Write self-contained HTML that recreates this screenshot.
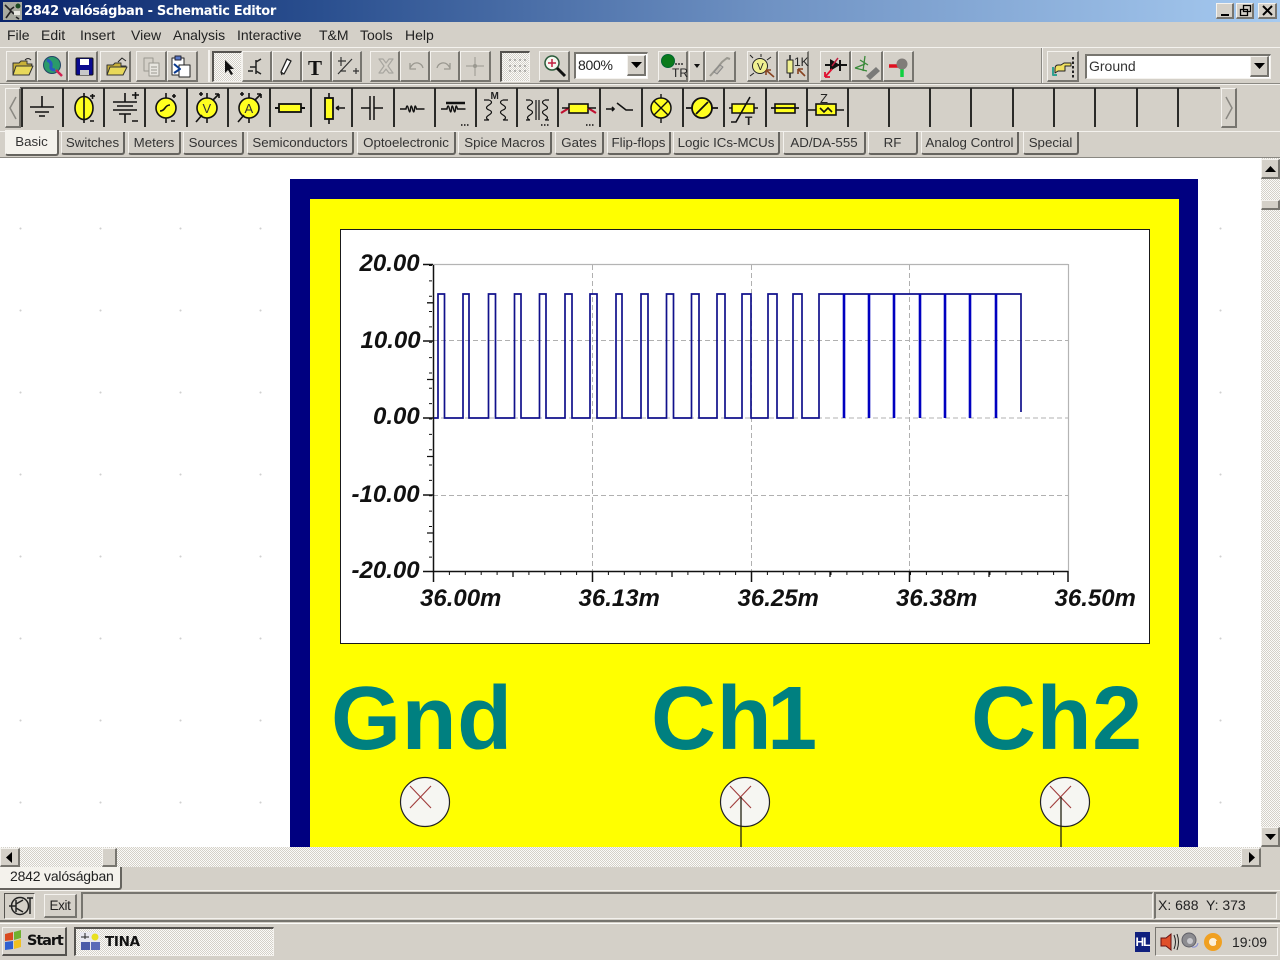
<!DOCTYPE html>
<html><head><meta charset="utf-8"><title>2842 valóságban - Schematic Editor</title>
<style>
*{box-sizing:border-box}
html,body{margin:0;padding:0;width:1280px;height:960px;overflow:hidden;background:#d4d0c8}
body{position:relative;font-family:"Liberation Sans",sans-serif;color:#1a1a1a}
.a{position:absolute}
.t{position:absolute;white-space:nowrap}
.m{position:absolute;top:27px;font-size:14px;line-height:16px;white-space:nowrap;color:#222}
.b{position:absolute;background:#d4d0c8;border-top:1px solid #f4f2ee;border-left:1px solid #f4f2ee;border-right:2px solid #77756f;border-bottom:2px solid #77756f}
.tb{top:51px;height:31px}
.tab{position:absolute;top:132px;height:23px;font-size:13.3px;line-height:21px;text-align:center;white-space:nowrap;border-right:2px solid #66645f;border-bottom:2px solid #66645f;border-left:1px solid #f4f2ee;border-radius:0 0 3px 3px;color:#333}
.sep{position:absolute;top:88px;width:2px;height:39px;background:#2a2a28}
.dith{background-color:#e9e7e3;background-image:repeating-conic-gradient(#d4d0c8 0 25%,#fbfbf9 0 50%);background-size:2px 2px}
.sunk{position:absolute;border-top:2px solid #77756f;border-left:2px solid #77756f;border-right:1px solid #f4f2ee;border-bottom:1px solid #f4f2ee}
</style></head><body>

<!-- title bar -->
<div class="a" style="left:0;top:0;width:1280px;height:22px;background:linear-gradient(90deg,#0a246a 0,#2a4f8f 25%,#6f92c3 60%,#a6caf0 100%)"></div>
<svg class="a" style="left:3px;top:2px" width="19" height="18"><rect width="19" height="18" fill="#a8aaa0"/><path d="M2 3l5 5 4-3M3 16l5-7 3 3M13 15l3 2" stroke="#222" stroke-width="1.600" fill="none"/><circle cx="15" cy="4" r="2.500" fill="#1a4a20"/><rect x="11" y="9" width="6" height="4" fill="#e8e8e0"/></svg>
<div class="t" style="left:24px;top:4px;font:bold 13px/16px 'DejaVu Sans',sans-serif;color:#fff;letter-spacing:-.34px">2842 valóságban - Schematic Editor</div>
<div class="b" style="left:1216px;top:3px;width:18px;height:16px"><div class="a" style="left:4px;top:10px;width:8px;height:2px;background:#000"></div></div>
<div class="b" style="left:1236px;top:3px;width:18px;height:16px"><svg class="a" style="left:2px;top:0" width="13" height="13"><path d="M4.500 1.500h7v6h-7zM1.500 5.500h7v6h-7z" fill="#d4d0c8" stroke="#000" stroke-width="1.300"/></svg></div>
<div class="b" style="left:1258px;top:3px;width:19px;height:16px"><svg class="a" style="left:2px;top:1px" width="13" height="12"><path d="M2 1l9 9M11 1l-9 9" stroke="#000" stroke-width="2"/></svg></div>

<!-- menu -->
<div class="m" style="left:7px">File</div><div class="m" style="left:41px">Edit</div><div class="m" style="left:80px">Insert</div><div class="m" style="left:131px">View</div><div class="m" style="left:173px">Analysis</div><div class="m" style="left:237px">Interactive</div><div class="m" style="left:319px">T&amp;M</div><div class="m" style="left:360px">Tools</div><div class="m" style="left:405px">Help</div>

<!-- toolbar separators -->
<div class="a" style="left:0;top:47px;width:1280px;height:1px;background:#f4f2ee"></div>
<div class="a" style="left:0;top:83px;width:1280px;height:1px;background:#8a8882"></div>
<div class="a" style="left:0;top:84px;width:1280px;height:1px;background:#f4f2ee"></div>
<div class="a" style="left:1041px;top:48px;width:1px;height:35px;background:#8a8882"></div>
<div class="a" style="left:1042px;top:48px;width:1px;height:35px;background:#f4f2ee"></div>
<div class="a" style="left:208px;top:50px;width:2px;height:32px;background:#f4f2ee"></div>

<!-- toolbar 1 -->
<div class="b tb" style="left:6px;width:31px"></div><div class="b tb" style="left:37px;width:31px"></div><div class="b tb" style="left:68px;width:30px"></div><div class="b tb" style="left:100px;width:31px"></div>
<div class="b tb" style="left:136px;width:31px"></div><div class="b tb" style="left:167px;width:31px"></div>
<div class="b tb dith" style="left:212px;width:30px;border-color:#55534f #f4f2ee #f4f2ee #55534f;border-width:2px 1px 1px 2px"></div>
<div class="b tb" style="left:242px;width:30px"></div><div class="b tb" style="left:272px;width:30px"></div><div class="b tb" style="left:302px;width:30px"></div><div class="b tb" style="left:332px;width:30px"></div>
<div class="b tb" style="left:370px;width:30px"></div><div class="b tb" style="left:400px;width:30px"></div><div class="b tb" style="left:430px;width:30px"></div><div class="b tb" style="left:460px;width:31px"></div>
<div class="b tb dith" style="left:500px;width:30px;border-color:#55534f #f4f2ee #f4f2ee #55534f;border-width:2px 1px 1px 2px"></div>
<div class="b tb" style="left:539px;width:31px"></div>
<div class="sunk" style="left:574px;top:52px;width:74px;height:27px;background:#fff"></div>
<div class="t" style="left:578px;top:57px;font-size:14px;line-height:16px;color:#222;letter-spacing:-.3px">800%</div>
<div class="b" style="left:627px;top:55px;width:19px;height:21px"><svg class="a" style="left:3px;top:6px" width="11" height="7"><path d="M0 0h11L5.500 6z" fill="#000"/></svg></div>
<div class="b tb" style="left:658px;width:30px"></div><div class="b tb" style="left:689px;width:16px"></div><div class="b tb" style="left:705px;width:31px"></div>
<div class="b tb" style="left:747px;width:31px"></div><div class="b tb" style="left:778px;width:31px"></div>
<div class="b tb" style="left:820px;width:31px"></div><div class="b tb" style="left:851px;width:32px"></div><div class="b tb" style="left:883px;width:31px"></div>
<div class="b tb" style="left:1047px;width:32px"></div>
<div class="sunk" style="left:1085px;top:54px;width:186px;height:25px;background:#fff"></div>
<div class="t" style="left:1089px;top:58px;font-size:14px;line-height:16px;color:#333">Ground</div>
<div class="b" style="left:1250px;top:56px;width:19px;height:21px"><svg class="a" style="left:3px;top:6px" width="11" height="7"><path d="M0 0h11L5.500 6z" fill="#000"/></svg></div>

<!-- toolbar 2 -->
<div class="a" style="left:20px;top:87px;width:1200px;height:2px;background:#55534f"></div>
<div class="b" style="left:5px;top:88px;width:16px;height:40px"><svg class="a" style="left:2px;top:7px" width="10" height="24"><path d="M8 1L2 12l6 11" fill="none" stroke="#8a8882" stroke-width="1.500"/></svg></div>
<div class="b" style="left:1221px;top:88px;width:16px;height:40px"><svg class="a" style="left:2px;top:7px" width="10" height="24"><path d="M2 1l6 11L2 23" fill="none" stroke="#8a8882" stroke-width="1.500"/></svg></div>
<div class="sep" style="left:21px"></div><div class="sep" style="left:62px"></div><div class="sep" style="left:103px"></div><div class="sep" style="left:144px"></div><div class="sep" style="left:186px"></div><div class="sep" style="left:227px"></div><div class="sep" style="left:269px"></div><div class="sep" style="left:310px"></div><div class="sep" style="left:351px"></div><div class="sep" style="left:393px"></div><div class="sep" style="left:434px"></div><div class="sep" style="left:475px"></div><div class="sep" style="left:516px"></div><div class="sep" style="left:557px"></div><div class="sep" style="left:599px"></div><div class="sep" style="left:641px"></div><div class="sep" style="left:682px"></div><div class="sep" style="left:723px"></div><div class="sep" style="left:765px"></div><div class="sep" style="left:806px"></div><div class="sep" style="left:847px"></div><div class="sep" style="left:888px"></div><div class="sep" style="left:929px"></div><div class="sep" style="left:970px"></div><div class="sep" style="left:1012px"></div><div class="sep" style="left:1053px"></div><div class="sep" style="left:1094px"></div><div class="sep" style="left:1136px"></div><div class="sep" style="left:1177px"></div>
<div class="a" style="left:0;top:131px;width:1280px;height:1px;background:#f4f2ee"></div>

<!-- tabs -->
<div class="tab" style="left:5px;top:130px;width:54px;height:26px;background:#f4f2ec;line-height:24px">Basic</div>
<div class="tab" style="left:61px;width:64px">Switches</div><div class="tab" style="left:128px;width:53px">Meters</div><div class="tab" style="left:183px;width:61px">Sources</div><div class="tab" style="left:247px;width:107px">Semiconductors</div><div class="tab" style="left:357px;width:99px">Optoelectronic</div><div class="tab" style="left:458px;width:94px">Spice Macros</div><div class="tab" style="left:555px;width:49px">Gates</div><div class="tab" style="left:607px;width:64px">Flip-flops</div><div class="tab" style="left:673px;width:107px">Logic ICs-MCUs</div><div class="tab" style="left:783px;width:83px">AD/DA-555</div><div class="tab" style="left:868px;width:50px">RF</div><div class="tab" style="left:921px;width:98px">Analog Control</div><div class="tab" style="left:1023px;width:56px">Special</div>

<!-- canvas -->
<div class="a" style="left:0;top:157px;width:1280px;height:1px;background:#8a8882"></div>
<div class="a" style="left:0;top:158px;width:1261px;height:689px;background-color:#fff;background-image:radial-gradient(circle at 20.500px 70.500px,#d0d0d0 0,#d0d0d0 .8px,transparent 1.200px);background-size:80px 82px"></div>
<div class="a" style="left:290px;top:179px;width:908px;height:668px;background:#000080"></div>
<div class="a" style="left:310px;top:199px;width:869px;height:648px;background:#ffff00"></div>
<div class="a" style="left:340px;top:229px;width:810px;height:415px;background:#fff;border:1px solid #1a1a1a"></div>

<svg class="a" style="left:0;top:0" width="1280" height="960" shape-rendering="geometricPrecision">
<!-- plot -->
<g fill="none">
<path d="M433 264.500H1068M1068.500 264V571" stroke="#b4b4b4" stroke-width="1.200"/>
<path d="M433 340.500H1068M433 418H1068M433 495.500H1068M592.500 265V571M751.500 265V571M909.500 265V571" stroke="#b0b0b0" stroke-width="1" stroke-dasharray="5 3"/>
<path d="M433.500 265V572M423 571.500H1068" stroke="#111" stroke-width="1.500"/>
<path d="M423 264.500h10M423 341h10M423 418h10M423 495h10M433.500 571v11M592.500 571v11M751.500 571v11M909.500 571v11M1068 571v11" stroke="#111" stroke-width="1.500"/>
<path d="M427 302.800h6M427 379.500h6M427 456.500h6M427 533h6M513 571v6M672 571v6M830 571v6M989 571v6" stroke="#111" stroke-width="1.300"/>
<path d="M430.500 265V571" stroke="#111" stroke-width="3" stroke-dasharray="1 14.350"/>
<path d="M433 573.500H1068" stroke="#111" stroke-width="3" stroke-dasharray="1 14.900"/>
<path d="M434 418H438V294H444.500V418H463V294H469V418H488.500V294H495.500V418H514.500V294H521V418H539.500V294H546V418H565V294H572V418H590V294H597V418H616V294H622V418H641V294H648V418H666.500V294H673.500V418H691.500V294H699V418H717V294H725V418H742V294H751V418H768V294H777V418H793V294H802V418H819V294H1021V412" stroke="#11118c" stroke-width="1.700"/>
<path d="M844 294V418M869 294V418M894 294V418M920 294V418M945 294V418M970 294V418M996 294V418" stroke="#0000c0" stroke-width="2.600"/>
</g>
<g font-family="Liberation Sans" font-weight="bold" font-style="italic" font-size="24" fill="#111">
<text x="359.500" y="271">20.00</text><text x="360.500" y="348">10.00</text><text x="373" y="424">0.00</text><text x="351.500" y="502">-10.00</text><text x="351.500" y="578">-20.00</text>
<text x="420" y="606">36.00m</text><text x="578.500" y="606">36.13m</text><text x="737.500" y="606">36.25m</text><text x="896" y="606">36.38m</text><text x="1054.500" y="606">36.50m</text>
</g>
<g font-family="Liberation Sans" font-weight="bold" font-size="90" fill="#008080" letter-spacing=".6">
<text x="331" y="749">Gnd</text><text x="651" y="749">Ch<tspan dx="-5">1</tspan></text><text x="971" y="749">Ch2</text>
</g>
<!-- connectors -->
<g fill="#f6f6f2" stroke="#222" stroke-width="1.200">
<circle cx="425" cy="802" r="24.500"/><circle cx="745" cy="802" r="24.500"/><circle cx="1065" cy="802" r="24.500"/>
</g>
<g stroke="#a03c3c" stroke-width="1.100" fill="none">
<path d="M410 786l21 22M431 786l-21 22M730 786l21 22M751 786l-21 22M1050 786l21 22M1071 786l-21 22"/>
</g>
<path d="M741 797V847M1061 797V847" stroke="#221" stroke-width="1.300"/>

<!-- toolbar 1 icons -->
<g stroke-linejoin="round">
<path d="M13 75V63h6l2-2h6v3h5l-3 11z" fill="#c8b038" stroke="#333"/><path d="M13 75l3-9h17l-4 9z" fill="#e8d85a" stroke="#333"/><path d="M25 60q3-3 6 0" stroke="#222" fill="none"/>
<circle cx="52" cy="65" r="8.500" fill="#2a9a6a" stroke="#246"/><path d="M47 60q5 2 4 6t4 4" stroke="#2858c0" stroke-width="3" fill="none"/><path d="M56 70l6 6" stroke="#d02050" stroke-width="2.500"/>
<rect x="76" y="58" width="17" height="17" rx="1" fill="#0a0a90" stroke="#111"/><rect x="80" y="59" width="9" height="6" fill="#fff"/><rect x="80" y="70" width="9" height="5" fill="#c8c8c8"/>
<path d="M107 75V65h6l2-2h6v3h5l-3 9z" fill="#c8b038" stroke="#333"/><path d="M107 75l3-8h17l-4 8z" fill="#e8d85a" stroke="#333"/><path d="M118 62l4-4 4 3" stroke="#222" fill="none"/>
<path d="M144 58h9v13h-9z" fill="#d4d0c8" stroke="#9a9890"/><path d="M149 63h10v13h-10z" fill="#e8e6e0" stroke="#9a9890"/><path d="M151 67h6M151 70h6M151 73h6" stroke="#9a9890"/>
<path d="M172 58h12v17h-12z" fill="#fff" stroke="#222"/><path d="M175 56h6v4h-6z" fill="#5878c8" stroke="#223"/><path d="M179 65h11v12h-11z" fill="#fff" stroke="#222"/><path d="M174 64l6 5-6 4" stroke="#0a3a90" stroke-width="2" fill="none"/>
<path d="M225 60v13l3-3 3 5 2-1-3-5h4z" fill="#111"/>
<path d="M256 60v14M250 67h6M256 62l5-3M256 71l5 3M248 71h5" stroke="#222" stroke-width="1.500" fill="none"/>
<path d="M284 74l-3-2 6-13 4 2z M281 72l1 3" fill="#fff" stroke="#222" stroke-width="1.300"/>
<text x="308" y="75" font-family="Liberation Serif" font-weight="bold" font-size="21" fill="#111">T</text>
<path d="M338 74l14-15M338 61h8M341 57v9M353 71h6M356 68v6M340 71h6" stroke="#333" stroke-width="1.200" fill="none"/>
<path d="M379 59l4 0 3 4 3-4 4 0-5 7 5 7h-4l-3-4-3 4h-4l5-7z" fill="#d4d0c8" stroke="#a8a6a0" stroke-width="1.200"/>
<path d="M410 68q3-6 8-5 4 1 5 5M410 63v6h6" stroke="#9a9890" fill="none" stroke-width="1.300"/>
<path d="M450 68q-3-6-8-5-4 1-5 5M450 63v6h-6" stroke="#9a9890" fill="none" stroke-width="1.300"/>
<path d="M475 57v19M466 66h18" stroke="#9a9890"/><circle cx="475" cy="66" r="2" fill="#9a9890"/>
<g fill="#666"><circle cx="510" cy="60" r=".7"/><circle cx="515" cy="60" r=".7"/><circle cx="520" cy="60" r=".7"/><circle cx="525" cy="60" r=".7"/><circle cx="510" cy="66" r=".7"/><circle cx="515" cy="66" r=".7"/><circle cx="520" cy="66" r=".7"/><circle cx="525" cy="66" r=".7"/><circle cx="510" cy="71" r=".7"/><circle cx="515" cy="71" r=".7"/><circle cx="520" cy="71" r=".7"/><circle cx="525" cy="71" r=".7"/></g>
<circle cx="552" cy="63" r="7" fill="#f4f8f0" stroke="#2a5a3a" stroke-width="1.500"/><path d="M552 59v8M548 63h8" stroke="#c02040" stroke-width="1.500"/><path d="M557 68l8 8" stroke="#111" stroke-width="3"/>
<circle cx="668" cy="61" r="6.500" fill="#0a7a1a" stroke="#063"/><path d="M675 64h9" stroke="#333" stroke-dasharray="2 1" stroke-width="1.500"/>
<text x="672" y="77" font-size="12" font-family="Liberation Sans" fill="#222">TR</text>
<path d="M694 64h6l-3 4z" fill="#111"/>
<path d="M710 76l8-9 4-5 5-4 3 1" stroke="#9a9890" stroke-width="2" fill="none"/><path d="M714 72l6-7 3 2-6 7z" fill="#c0bcb4" stroke="#888"/>
<circle cx="760" cy="66" r="7.500" fill="#f0f090" stroke="#222"/><text x="757" y="70" font-size="10" fill="#222" font-family="Liberation Sans">V</text><path d="M753 58l-3-3M761 57v-3M767 60l4-3M754 73l-4 3" stroke="#222"/><path d="M766 70l8 7M766 70h5M766 70v5" stroke="#842" stroke-width="1.600" fill="none"/>
<rect x="787" y="60" width="6" height="13" fill="#f0f090" stroke="#222"/><path d="M790 55v5M790 73v5" stroke="#222" stroke-width="1.500"/><text x="794" y="66" font-size="12" fill="#222" font-family="Liberation Sans">1K</text><path d="M798 69l7 7M798 69h5M798 69v5" stroke="#842" stroke-width="1.600" fill="none"/>
<path d="M825 65h22M840 60v11" stroke="#111" stroke-width="2"/><path d="M830 59l10 6-10 6z" fill="#111"/><path d="M838 58l-6 8" stroke="#c02040" stroke-width="1.500"/><path d="M832 69l-7 8M825 77v-5M825 77h5" stroke="#e01030" stroke-width="1.800" fill="none"/>
<path d="M855 68l10-4M855 68l12 3M865 56l-2 15M860 60l8 5" stroke="#3a8a3a" fill="none" stroke-width="1.300"/><path d="M866 76l10-9 4 4-10 9z" fill="#7a7a78"/>
<path d="M889 66h10" stroke="#e01020" stroke-width="3.500"/><path d="M902 68v9" stroke="#10d040" stroke-width="3.500"/><circle cx="902" cy="64" r="5.500" fill="#807c78"/>
<path d="M1055 69q0-4 3-4h3l3-2h7v3h-6v5h-7l-3 2z" fill="#f0e060" stroke="#222"/><path d="M1053 67v8h4" stroke="#30a090" stroke-width="2" fill="none"/><path d="M1073 57v21" stroke="#222" stroke-width="2" stroke-dasharray="2.500 2"/>
</g>

<!-- toolbar 2 icons -->
<g stroke="#111" stroke-width="1.600" fill="none">
<path d="M42 96v11M30 107h24M35 112h14M39 116h6"/>
<ellipse cx="84" cy="108" rx="9" ry="11.500" fill="#ffff20"/><path d="M84 93v30M90 96h5M92.500 94v5M90 121h4"/>
<path d="M125 93v9M113 102h24M117 106h16M113 110h24M119 114h12M125 114v9M132 95h7M135.500 92v7M132 121h6"/>
<circle cx="166" cy="108" r="10" fill="#ffff20"/><path d="M166 93v5M166 118v5M160 111q3 0 5-3t5-3M172 96h4M174 94v4M171 121h4"/>
<circle cx="207" cy="108" r="10" fill="#ffff20"/><path d="M207 93v5M207 118v5M196 122l6-7M213 100l6-6M219 94h-4M219 94v4M199 94h4M201 92v4"/>
<circle cx="249" cy="108" r="10" fill="#ffff20"/><path d="M249 93v5M249 118v5M238 122l6-7M255 100l6-6M261 94h-4M261 94v4M240 94h4M242 92v4"/>
<g font-family="Liberation Sans" font-size="13" fill="#333" stroke="none"><text x="202.500" y="113">V</text><text x="244.500" y="113">A</text></g>
<rect x="279" y="104" width="22" height="8" fill="#ffff20" stroke-width="1.800"/><path d="M275 108h4M301 108h4" stroke-width="2"/>
<rect x="325" y="98" width="8" height="21" fill="#ffff20" stroke-width="1.800"/><path d="M329 93v5M329 119v5M345 108h-9M336 108l3-2M336 108l3 2"/>
<path d="M361 108h9M374 108h9M370 96v24M374 96v24" stroke-width="1.500"/>
<path d="M400 109h6q1-6 2.500 0t2 0 2 0 2 0 2 0h8" stroke-width="1.400"/>
<path d="M441 109h6q1-6 2.500 0t2 0 2 0 2 0 2 0h8" stroke-width="1.400"/><path d="M446 103h19" stroke-width="2.500"/><path d="M461 125h9" stroke-dasharray="1.500 1.500"/>
<g stroke-width="1.200"><path d="M489 100q5 2 0 5t0 5 0 5 0 5M503 100q-5 2 0 5t0 5 0 5 0 5M484 100h5M484 120h5M503 100h5M503 120h5"/></g>
<text x="490.500" y="99" font-size="10" font-weight="bold" font-family="Liberation Sans" fill="#222" stroke="none">M</text>
<path d="M530 100q5 2 0 5t0 5 0 5 0 5M545 100q-5 2 0 5t0 5 0 5 0 5M536 100v20M539 100v20M526 100h4M526 120h4M545 100h4M545 120h4" stroke-width="1.200"/><path d="M541 125h9" stroke-dasharray="1.500 1.500"/>
<rect x="569" y="104" width="19" height="9" fill="#ffff20" stroke-width="1.600"/><path d="M561 113l8-5M596 113l-8-5" stroke="#c01030" stroke-width="2.200"/><path d="M562 108h7M588 108h8"/><path d="M586 125h9" stroke-dasharray="1.500 1.500"/>
<path d="M606 109h8M612 107l2 2-2 2M617 103l9 7h7"/>
<circle cx="661" cy="108" r="10" fill="#ffff20" stroke-width="1.500"/><path d="M654 101l14 14M668 101l-14 14M661 94v4M661 118v5" stroke-width="1.400"/>
<ellipse cx="702" cy="108" rx="10" ry="10" fill="#ffff20" stroke-width="1.800"/><path d="M696 114l12-12M686 108h6M712 108h6" stroke-width="1.800"/>
<rect x="732" y="104" width="22" height="9" fill="#ffff20" stroke-width="1.500"/><path d="M729 108h3M754 108h4M731 122h5l14-25"/><text x="745" y="125" font-size="12" font-weight="bold" font-family="Liberation Sans" fill="#222" stroke="none">T</text>
<rect x="775" y="104" width="20" height="9" fill="#ffff20"/><path d="M771 108h28" stroke-width="1.800"/>
<rect x="816" y="104" width="20" height="11" fill="#ffff20"/><path d="M808 110h8M836 110h8M820 108l4 4 4-4 4 4"/><text x="820" y="103" font-size="13" font-family="Liberation Sans" fill="#222" stroke="none">Z</text>
</g>

<!-- status icon -->
<circle cx="20" cy="906" r="8.500" fill="none" stroke="#222" stroke-width="1.500"/><path d="M9 906h7M16 900v12M16 904l7-4M16 908l7 4M27 898h6M30 898v16" stroke="#222" stroke-width="1.500" fill="none"/>
<!-- start logo -->
<path d="M5 934l8-2v8l-8 1z" fill="#d84a20"/><path d="M14 932l7-2v8l-7 2z" fill="#70b030"/><path d="M5 942l8-1v8l-8 1z" fill="#3060d0"/><path d="M14 941l7-2v8l-7 2z" fill="#f0c020"/>
</svg>

<!-- right scrollbar -->
<div class="a dith" style="left:1261px;top:158px;width:19px;height:689px"></div>
<div class="b" style="left:1261px;top:159px;width:19px;height:20px"></div>
<div class="b" style="left:1261px;top:200px;width:19px;height:10px"></div>
<div class="b" style="left:1261px;top:827px;width:19px;height:20px"></div>
<svg class="a" style="left:1261px;top:159px" width="19" height="20"><path d="M4 13h11L9.500 7z" fill="#000"/></svg>
<svg class="a" style="left:1261px;top:827px" width="19" height="20"><path d="M4 7h11L9.500 13z" fill="#000"/></svg>

<!-- bottom scrollbar -->
<div class="a dith" style="left:0;top:847px;width:1260px;height:20px"></div>
<div class="b" style="left:0;top:848px;width:20px;height:19px"><svg class="a" style="left:4px;top:2px" width="10" height="13"><path d="M7 1v11L1 6.500z" fill="#000"/></svg></div>
<div class="b" style="left:102px;top:848px;width:15px;height:19px"></div>
<div class="b" style="left:1241px;top:848px;width:20px;height:19px"><svg class="a" style="left:5px;top:2px" width="10" height="13"><path d="M2 1v11l6-5.500z" fill="#000"/></svg></div>

<!-- doc tab -->
<div class="a" style="left:0;top:867px;width:122px;height:23px;background:#f4f2ec;border-right:2px solid #66645f;border-bottom:2px solid #66645f;border-radius:0 0 3px 0;font-size:14px;line-height:19px;padding-left:10px;color:#222;white-space:nowrap;letter-spacing:-.2px">2842 valóságban</div>
<div class="a" style="left:0;top:890px;width:1280px;height:1px;background:#f4f2ee"></div>

<!-- status -->
<div class="a" style="left:4px;top:893px;width:31px;height:26px;border:1px solid #55534f;border-right-color:#f4f2ee;border-bottom-color:#f4f2ee"></div>
<div class="b" style="left:44px;top:894px;width:33px;height:24px;font-size:13.500px;line-height:21px;text-align:center;color:#222;letter-spacing:-.4px">Exit</div>
<div class="sunk" style="left:81px;top:892px;width:1072px;height:27px"></div>
<div class="sunk" style="left:1154px;top:892px;width:123px;height:27px;font-size:14px;line-height:23px;padding-left:2px;color:#222;white-space:nowrap">X: 688&nbsp; Y: 373</div>
<div class="a" style="left:0;top:920px;width:1280px;height:2px;background:#77756f"></div>

<!-- taskbar -->
<div class="a" style="left:0;top:923px;width:1280px;height:1px;background:#fdfdfb"></div>
<div class="a" style="left:2px;top:927px;width:65px;height:29px;border-top:1px solid #f4f2ee;border-left:1px solid #f4f2ee;border-right:2px solid #55534f;border-bottom:2px solid #55534f"></div>
<div class="t" style="left:27px;top:933px;font-weight:bold;font-size:14.500px;line-height:16px;color:#111;font-family:'DejaVu Sans',sans-serif;letter-spacing:-1.100px">Start</div>
<div class="a dith" style="left:74px;top:927px;width:200px;height:29px;border-top:2px solid #55534f;border-left:2px solid #55534f;border-right:1px solid #f4f2ee;border-bottom:1px solid #f4f2ee"></div>
<div class="t" style="left:105px;top:934px;font-weight:bold;font-size:13.500px;line-height:16px;color:#111;font-family:'DejaVu Sans',sans-serif;letter-spacing:-.3px">TINA</div>
<svg class="a" style="left:80px;top:932px" width="20" height="18"><rect width="20" height="18" fill="#e8e8f0"/><rect x="1" y="10" width="9" height="8" fill="#4a5aa8"/><rect x="11" y="10" width="9" height="8" fill="#5a6ab8"/><circle cx="15" cy="5" r="3.500" fill="#e8e020"/><path d="M1 5h8M5 1v6" stroke="#222"/></svg>
<div class="a" style="left:1135px;top:932px;width:15px;height:20px;background:#10207e;color:#fff;font-size:12px;font-weight:bold;line-height:20px;text-align:center;letter-spacing:-1px">HL</div>
<div class="a" style="left:1155px;top:927px;width:123px;height:29px;border-top:1px solid #77756f;border-left:1px solid #77756f;border-right:1px solid #f4f2ee;border-bottom:1px solid #f4f2ee"></div>
<div class="t" style="left:1232px;top:934px;font-size:14px;line-height:16px;color:#222">19:09</div>
<svg class="a" style="left:1155px;top:927px" width="70" height="28"><path d="M6 11h5l5-4v16l-5-4H6z" fill="#e0502a" stroke="#611"/><path d="M19 8q3 7 0 14M22 7q3 8 0 16" stroke="#222" fill="none"/><circle cx="34" cy="13" r="7" fill="#8c8c90" stroke="#606068"/><circle cx="35" cy="14" r="3" fill="#c8c8cc"/><path d="M37 20q5 1 6-4" stroke="#8890d8" fill="none"/><circle cx="58" cy="15" r="9" fill="#f0a020"/><circle cx="58" cy="15" r="4" fill="#fbf0d8"/><path d="M62 14v6" stroke="#f0a020" stroke-width="2"/></svg>
</body></html>
